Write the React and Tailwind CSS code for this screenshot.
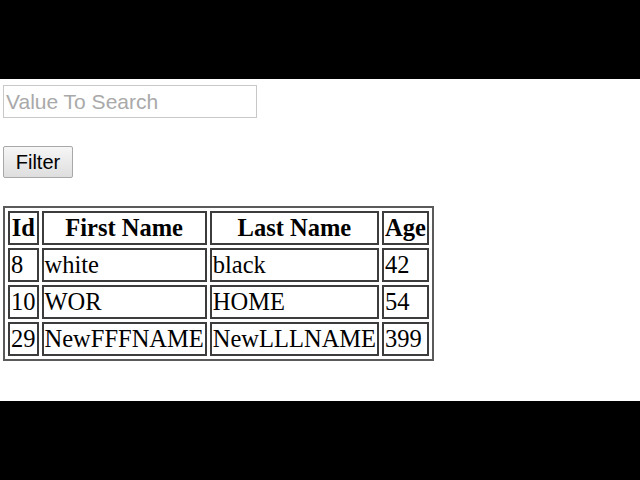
import React from "react";

const rows = [
  ["8", "white", "black", "42"],
  ["10", "WOR", "HOME", "54"],
  ["29", "NewFFFNAME", "NewLLLNAME", "399"],
];

export default function App() {
  return (
    <div className="w-[640px] h-[480px] bg-black flex flex-col">
      <div className="h-[79px] shrink-0 bg-black" />
      <div className="h-[322px] shrink-0 bg-white flex flex-col items-start pl-[3px] pt-[6px]">
        <input
          type="text"
          placeholder="Value To Search"
          className="w-[254px] h-[33px] border border-[#c8c8c8] px-[2px] text-[21px] text-black placeholder:text-[#a9a9a9] outline-none"
          style={{ fontFamily: '"Liberation Sans", Arial, sans-serif' }}
        />
        <button
          className="mt-[28px] w-[70px] h-[32px] rounded-[2px] border border-[#a8a8a8] bg-gradient-to-b from-[#f6f6f6] to-[#dedede] text-[20px] text-black"
          style={{ fontFamily: '"Liberation Sans", Arial, sans-serif' }}
        >
          Filter
        </button>
        <table
          className="mt-[28px] border-2 border-[#5a5a5a] border-separate border-spacing-[3px] text-[24.5px] text-black leading-[28px]"
          style={{ fontFamily: '"Liberation Serif", "Times New Roman", serif' }}
        >
          <thead>
            <tr>
              {["Id", "First Name", "Last Name", "Age"].map((h) => (
                <th key={h} className="border-2 border-[#3c3c3c] px-[1px] py-[1px] font-bold text-center">
                  {h}
                </th>
              ))}
            </tr>
          </thead>
          <tbody>
            {rows.map((r, i) => (
              <tr key={i}>
                {r.map((c, j) => (
                  <td key={j} className="border-2 border-[#3c3c3c] px-[1px] py-[1px] text-left">
                    {c}
                  </td>
                ))}
              </tr>
            ))}
          </tbody>
        </table>
      </div>
      <div className="flex-1 bg-black" />
    </div>
  );
}
